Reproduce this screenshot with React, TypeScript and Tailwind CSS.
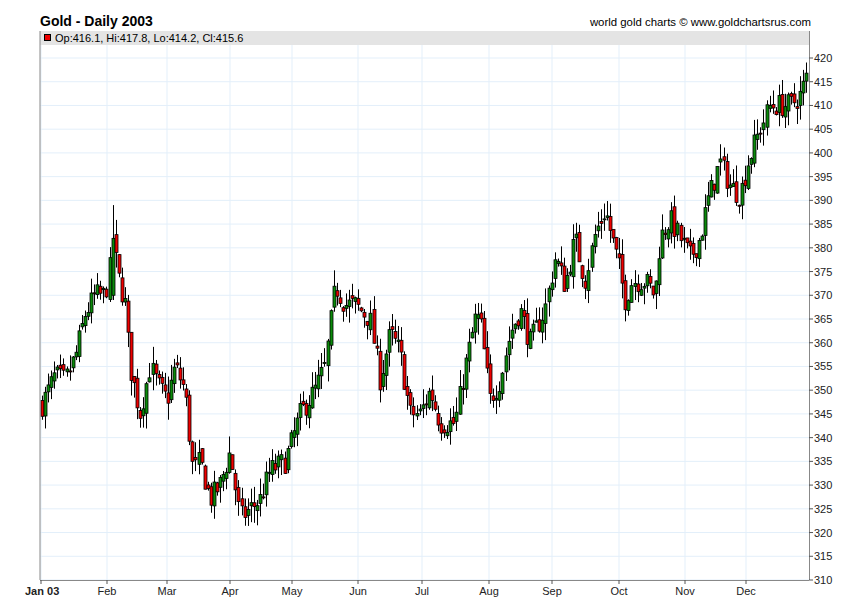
import React from "react";

const X0 = 40, X1 = 809, TOP = 31, BOT = 580;
const py = (p: number) => BOT - ((p - 310) / 110) * (BOT - 58);

const keys: [number, number][] = [
  [42,347],[55,353],[65,352],[75,357],[85,366],[95,370],[105,370],[110,376],[112,382],[118,374],[125,368],[130,355],[140,345],[150,355],[160,350],[167,348],[175,355],[185,350],[193,333],[200,335],[210,327],[220,330],[230,337],[240,323],[250,325],[260,327],[270,333],[285,335],[300,345],[315,350],[325,355],[335,372],[345,368],[355,368],[370,365],[380,352],[390,362],[400,358],[410,345],[420,345],[430,350],[440,343],[455,343],[465,355],[475,365],[480,365],[490,348],[500,352],[510,362],[520,367],[530,360],[545,367],[555,378],[565,372],[575,382],[585,373],[595,383],[605,388],[612,382],[620,375],[625,369],[632,373],[645,373],[655,370],[660,382],[670,386],[680,382],[690,378],[700,382],[708,390],[720,398],[730,393],[740,391],[748,398],[760,405],[770,410],[780,410],[790,410],[800,412],[807,416]
];
function interp(x: number) {
  for (let i = 0; i < keys.length - 1; i++) {
    const [a, pa] = keys[i], [b, pb] = keys[i + 1];
    if (x >= a && x <= b) return pa + ((pb - pa) * (x - a)) / (b - a);
  }
  return keys[keys.length - 1][1];
}
let seed = 7;
const rnd = () => { seed = (seed * 16807) % 2147483647; return seed / 2147483647; };
const candles: { x: number; o: number; h: number; l: number; c: number }[] = [];
{
  let prev = 347;
  for (let x = 42; x <= 807; x += 3.07) {
    let c = interp(x) + (rnd() - 0.5) * 5;
    let o = prev + (rnd() - 0.5) * 2;
    let h = Math.max(o, c) + rnd() * 3.5;
    let l = Math.min(o, c) - rnd() * 3.5;
    if (Math.abs(x - 112) < 1.6) { o = 370; c = 382; h = 389; l = 369; }
    candles.push({ x, o, h, l, c });
    prev = c;
  }
}
const months: [string, number][] = [["Jan 03",41],["Feb",107],["Mar",167],["Apr",230],["May",292],["Jun",358],["Jul",422],["Aug",489],["Sep",552],["Oct",619],["Nov",685],["Dec",746]];
const prices: number[] = [];
for (let p = 310; p <= 420; p += 5) prices.push(p);

export default function App() {
  const f = { fontFamily: '"Liberation Sans", Arial, sans-serif' };
  return (
    <div className="w-[850px] h-[616px] bg-white" style={f}>
      <div className="h-[31px] flex items-end justify-between pl-[40px] pr-[39px] pb-[3px]">
        <span className="text-[14px] font-bold text-black leading-none">Gold - Daily 2003</span>
        <span className="text-[11.4px] text-black leading-none">world gold charts © www.goldchartsrus.com</span>
      </div>
      <svg width="850" height="585" viewBox="0 31 850 585" className="block">
        {prices.map(p => <line key={p} x1={X0} x2={X1} y1={py(p)} y2={py(p)} stroke="#e3effa" />)}
        {months.map(([m, x]) => <line key={m} x1={x} x2={x} y1={TOP} y2={BOT} stroke="#e3effa" />)}
        <rect x={X0} y={TOP} width={X1 - X0} height={14} fill="#e4e4e4" />
        <rect x={44.5} y={34.5} width={6} height={6} fill="#e00" stroke="#000" />
        <text x={55} y={42} fontSize={11} fill="#000">Op:416.1, Hi:417.8, Lo:414.2, Cl:415.6</text>
        {candles.map((k, i) => {
          const up = k.c >= k.o;
          const top = py(Math.max(k.o, k.c)), bot = py(Math.min(k.o, k.c));
          const xx = Math.round(k.x) + 0.5;
          return (
            <g key={i}>
              <line x1={xx} x2={xx} y1={py(k.h)} y2={py(k.l)} stroke="#000" />
              <rect x={xx - 1.5} y={top} width={3} height={Math.max(bot - top, 1)} fill={up ? "#0a8a0a" : "#e00"} stroke="#000" strokeWidth={0.8} />
            </g>
          );
        })}
        <line x1={X0} x2={X0} y1={TOP} y2={BOT} stroke="#888" />
        <line x1={X0} x2={X1} y1={BOT + 0.5} y2={BOT + 0.5} stroke="#888" />
        <line x1={X1 + 0.5} x2={X1 + 0.5} y1={TOP} y2={BOT} stroke="#888" />
        {prices.map(p => (
          <g key={p}>
            <line x1={X1} x2={X1 + 4} y1={py(p)} y2={py(p)} stroke="#555" />
            <text x={814} y={py(p) + 4} fontSize={11} fill="#222">{p}</text>
          </g>
        ))}
        {months.map(([m, x], i) => (
          <g key={m}>
            <line x1={x} x2={x} y1={BOT} y2={BOT + 4} stroke="#555" />
            <text x={i === 0 ? 25 : x} y={595} fontSize={11} fill="#222" fontWeight={i === 0 ? "bold" : "normal"} textAnchor={i === 0 ? "start" : "middle"}>{m}</text>
          </g>
        ))}
      </svg>
    </div>
  );
}
